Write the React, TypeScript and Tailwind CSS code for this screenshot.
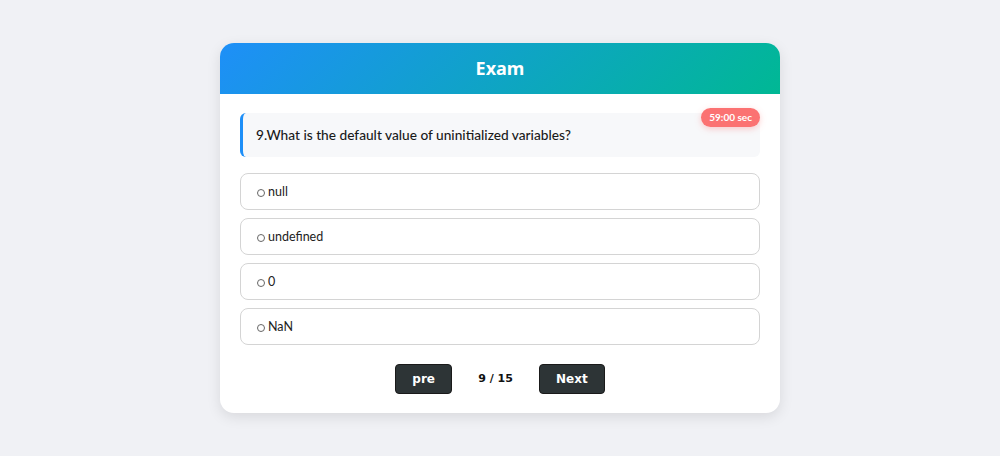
import React from 'react';

const options = ['null', 'undefined', '0', 'NaN'];

export default function App() {
    return (
        <div className="flex h-[456px] w-full items-center justify-center bg-[#f0f1f5] font-['Lato',sans-serif]">
            <div className="w-[560px] h-[370px] overflow-hidden rounded-[14px] bg-white shadow-[0_4px_14px_rgba(0,0,0,0.1)]">
                {/* header */}
                <div className="flex h-[51px] items-center justify-center bg-[linear-gradient(135deg,#1e8ff8,#00b894)]">
                    <h1 className="font-['Noto_Sans',sans-serif] text-[18px] font-bold text-white">Exam</h1>
                </div>
                <div className="flex flex-col px-5 pt-[19px]">
                    {/* question */}
                    <div className="relative flex h-[44px] items-center rounded-md border-l-[3px] border-[#1e8ff8] bg-[#f7f8fa] pl-[13px]">
                        <p className="text-[13.7px] font-medium text-[#1a1a1a]">9.What is the default value of uninitialized variables?</p>
                        <span className="absolute right-0 top-[-5px] flex h-[19px] items-center rounded-full bg-[#fb7272] px-[8px] text-[10px] font-bold text-white shadow-[0_2px_6px_rgba(251,114,114,0.35)]">59:00 sec</span>
                    </div>
                    {/* options */}
                    <div className="mt-4 flex flex-col gap-2">
                        {options.map((opt, i) => (
                            <label key={i} className="flex h-[37px] items-center gap-[3px] rounded-lg border border-[#d4d4d4] pl-4 pt-[2px] text-[12.5px] text-[#222]">
                                <span className="h-[8px] w-[8px] rounded-full border border-[#666]" />
                                {opt}
                            </label>
                        ))}
                    </div>
                    {/* nav */}
                    <div className="mt-[19px] flex items-center justify-center font-['DejaVu_Sans',sans-serif]">
                        <button className="h-[30px] w-[57px] rounded-[4px] border border-[#1a1a1a] bg-[#2d3436] text-[12px] font-bold text-white">pre</button>
                        <span className="mx-[26px] text-[11px] font-bold text-[#111]">9 / 15</span>
                        <button className="h-[30px] w-[66px] rounded-[4px] border border-[#1a1a1a] bg-[#2d3436] text-[12px] font-bold text-white">Next</button>
                    </div>
                </div>
            </div>
        </div>
    );
}
